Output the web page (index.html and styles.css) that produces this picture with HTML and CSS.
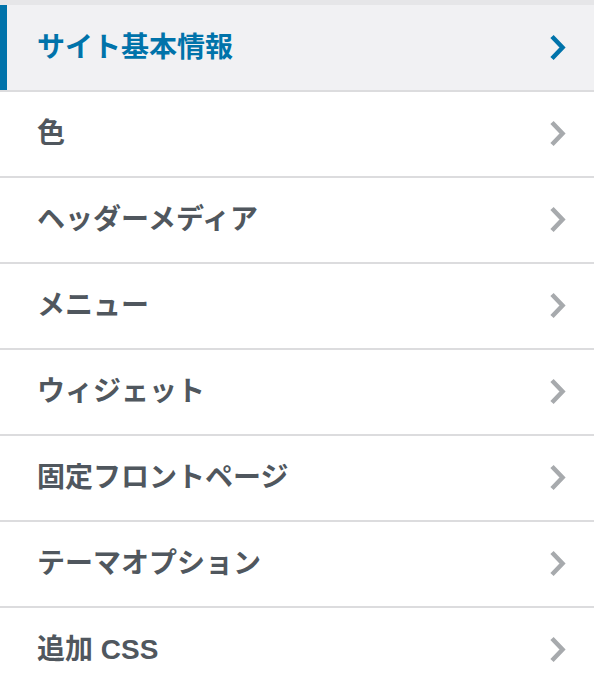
FILE: index.html
```html
<!DOCTYPE html>
<html lang="ja">
<head>
<meta charset="utf-8">
<title>Customizer</title>
<link rel="stylesheet" href="styles.css">
</head>
<body>
<div class="top-band"></div>
<ul class="panel-list">
  <li class="panel active"><span class="label">サイト基本情報</span><svg class="chev" viewBox="0 0 18 30" width="18" height="30"><polyline points="3,3.5 13.5,14.5 3,25.5" /></svg></li>
  <li class="panel"><span class="label">色</span><svg class="chev" viewBox="0 0 18 30" width="18" height="30"><polyline points="3,3.5 13.5,14.5 3,25.5" /></svg></li>
  <li class="panel"><span class="label">ヘッダーメディア</span><svg class="chev" viewBox="0 0 18 30" width="18" height="30"><polyline points="3,3.5 13.5,14.5 3,25.5" /></svg></li>
  <li class="panel"><span class="label">メニュー</span><svg class="chev" viewBox="0 0 18 30" width="18" height="30"><polyline points="3,3.5 13.5,14.5 3,25.5" /></svg></li>
  <li class="panel"><span class="label">ウィジェット</span><svg class="chev" viewBox="0 0 18 30" width="18" height="30"><polyline points="3,3.5 13.5,14.5 3,25.5" /></svg></li>
  <li class="panel"><span class="label">固定フロントページ</span><svg class="chev" viewBox="0 0 18 30" width="18" height="30"><polyline points="3,3.5 13.5,14.5 3,25.5" /></svg></li>
  <li class="panel"><span class="label">テーマオプション</span><svg class="chev" viewBox="0 0 18 30" width="18" height="30"><polyline points="3,3.5 13.5,14.5 3,25.5" /></svg></li>
  <li class="panel"><span class="label">追加 CSS</span><svg class="chev" viewBox="0 0 18 30" width="18" height="30"><polyline points="3,3.5 13.5,14.5 3,25.5" /></svg></li>
</ul>
</body>
</html>
```

FILE: styles.css
```css
html, body {
  margin: 0;
  padding: 0;
  background: #ffffff;
}

body {
  font-family: "Liberation Sans", "Noto Sans CJK JP", sans-serif;
}

.top-band {
  height: 5px;
  background: #e6e6e8;
}

.panel-list {
  list-style: none;
  margin: 0;
  padding: 0;
}

.panel {
  display: flex;
  align-items: center;
  justify-content: space-between;
  height: 84px;
  padding: 0 27px 0 37px;
  border-bottom: 2px solid #dcdcde;
  background: #ffffff;
  color: #50575e;
  box-sizing: content-box;
}

.panel.active {
  height: 85px;
  background: #f1f1f3;
  color: #0073aa;
  box-shadow: inset 7px 0 0 #0073aa;
}

.label {
  font-size: 28px;
  font-weight: 700;
  line-height: 1;
}

.chev {
  display: block;
  fill: none;
  stroke: #a7aaad;
  stroke-width: 4.5;
  stroke-linecap: butt;
  stroke-linejoin: miter;
}

.panel.active .chev {
  stroke: #0073aa;
}
```
